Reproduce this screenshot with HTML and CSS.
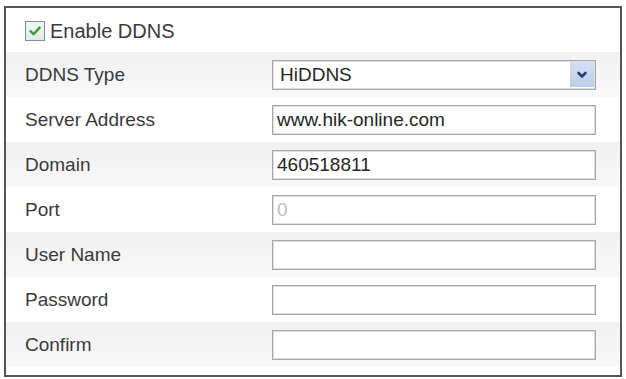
FILE: index.html
```html
<!DOCTYPE html>
<html>
<head>
<meta charset="utf-8">
<link rel="stylesheet" href="styles.css">
</head>
<body>
<div class="panel">
  <div class="row row-first">
    <label class="check-label">
      <span class="checkbox">
        <svg width="14" height="14" viewBox="0 0 14 14"><path d="M2.5 7.2 L5.6 10.2 L11.6 3.6" fill="none" stroke="#3d9b35" stroke-width="2.4" stroke-linecap="round" stroke-linejoin="round"/></svg>
      </span>
      <span>Enable DDNS</span>
    </label>
  </div>
  <div class="row alt">
    <span class="label">DDNS Type</span>
    <div class="select">
      <span class="select-text">HiDDNS</span>
      <span class="select-btn">
        <svg width="12" height="8" viewBox="0 0 12 8"><path d="M2.5 2 L6 5.5 L9.5 2" fill="none" stroke="#24426f" stroke-width="2.6" stroke-linecap="round" stroke-linejoin="round"/></svg>
      </span>
    </div>
  </div>
  <div class="row">
    <span class="label">Server Address</span>
    <div class="field">www.hik-online.com</div>
  </div>
  <div class="row alt">
    <span class="label">Domain</span>
    <div class="field">460518811</div>
  </div>
  <div class="row">
    <span class="label">Port</span>
    <div class="field disabled">0</div>
  </div>
  <div class="row alt">
    <span class="label">User Name</span>
    <div class="field"></div>
  </div>
  <div class="row">
    <span class="label">Password</span>
    <div class="field"></div>
  </div>
  <div class="row alt">
    <span class="label">Confirm</span>
    <div class="field"></div>
  </div>
</div>
</body>
</html>
```
FILE: styles.css
```css
html, body {
  margin: 0;
  padding: 0;
  background: #ffffff;
}
body {
  font-family: "Liberation Sans", Arial, sans-serif;
  color: #3a3a3a;
}
.panel {
  margin: 6px 4px 2px 4px;
  width: 614px;
  border: 2px solid #555555;
  padding-bottom: 8px;
  background: #ffffff;
}
.row {
  height: 45px;
  display: grid;
  grid-template-columns: 266px 324px;
  align-items: center;
  font-size: 19px;
}
.row-first {
  height: 44px;
  display: flex;
}
.alt {
  background: linear-gradient(#f1f1f1, #f8f8f8);
}
.label {
  padding-left: 19px;
}
.check-label {
  display: flex;
  align-items: center;
  gap: 5px;
  padding-left: 19px;
  padding-top: 2px;
  font-size: 20px;
}
.checkbox {
  width: 18px;
  height: 18px;
  border: 1px solid #7d8ea6;
  background: linear-gradient(#f2f6f2, #e2ece2);
  display: flex;
  align-items: center;
  justify-content: center;
}
.field, .select {
  box-sizing: border-box;
  height: 30px;
  border: 1px solid #a3a8ae;
  box-shadow: inset 0 0 0 1px #dcdfe2;
  background: #ffffff;
  display: flex;
  align-items: center;
  padding-left: 4px;
  color: #262626;
  font-size: 19px;
}
.select {
  padding-left: 7px;
  padding-right: 1px;
}
.select-text {
  flex: 1;
}
.select-btn {
  width: 24px;
  height: 25px;
  background: linear-gradient(#d3dff2, #bccde9);
  display: flex;
  align-items: center;
  justify-content: center;
}
.disabled {
  color: #bdbdbd;
}
```
